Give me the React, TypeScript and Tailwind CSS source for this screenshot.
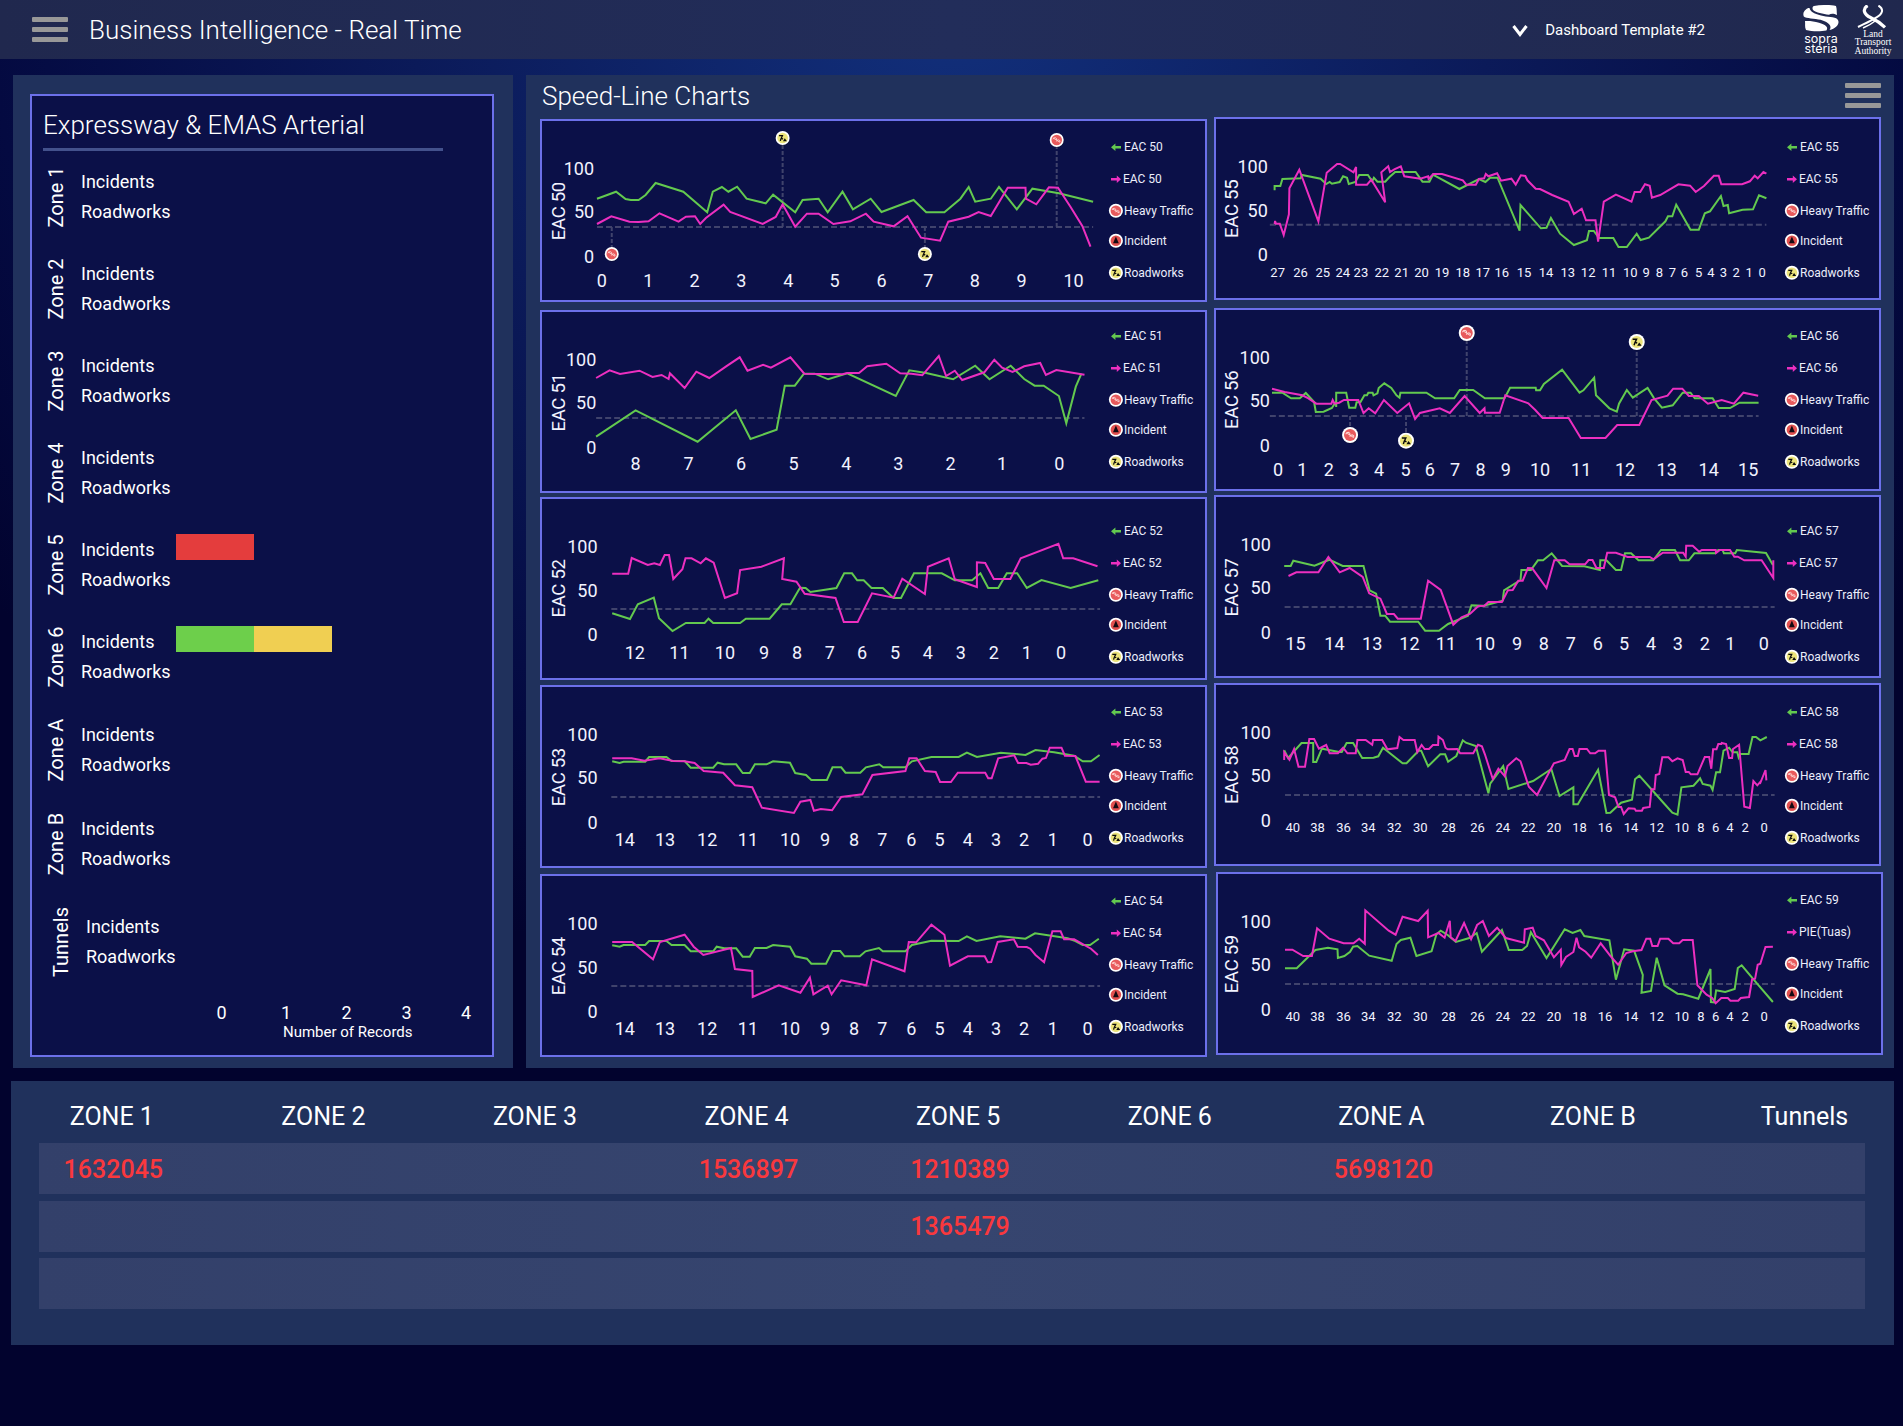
import React from "react";

type Kind = "heavy" | "incident" | "road";
type Marker = { kind: Kind; x: number; y: number };
type Chart = {
  name: string;
  inbound?: string;
  panel: string;
  legend: string;
  dx: number;
  dy: number;
  plotWidth: number;
  labelX: number;
  labelY: number;
  yRight: number;
  yTicks: [number, number, number];
  base: [number, number, number];
  tickY: number;
  tickSize: number;
  ticks: [string, number][];
  green: string;
  pink: string;
  markers?: Marker[];
  markerSize?: number;
};

/* Plot units: 1568 units span 680px horizontally, 3 units per pixel vertically. */
const UX = 680 / 1568;
const UY = 1 / 3;

const toPoints = (s: string) =>
  s
    .split(" ")
    .map((p) => {
      const [x, y] = p.split(",").map(Number);
      return `${(x * UX).toFixed(1)},${(y * UY).toFixed(1)}`;
    })
    .join(" ");

const down = (from: number, xs: number[], step = 1): [string, number][] =>
  xs.map((x, i) => [String(from - i * step), x]);
const up = (xs: number[]): [string, number][] => xs.map((x, i) => [String(i), x]);

const ticks14 = down(14, [207, 300, 397, 491, 588, 669, 736, 801, 868, 933, 998, 1063, 1128, 1194, 1274]);
const ticks40 = down(40, [191, 248, 308, 365, 425, 485, 550, 617, 675, 734, 793, 852, 911, 971, 1030, 1088, 1132, 1166, 1199, 1234, 1278], 2);

const leftCharts: Chart[] = [
  {
    name: "EAC 50", panel: "", legend: "pt-[10px]", dx: 5, dy: 4, plotWidth: 567,
    labelX: 55, labelY: 288, yRight: 134, yTicks: [161, 291, 425], base: [143, 1287, 336],
    tickY: 497, tickSize: 18, ticks: up([154, 261, 368, 476, 584, 691, 799, 907, 1014, 1122, 1242]),
    green: "143,251 187,230 209,252 221,255 239,255 255,240 278,204 342,230 397,292 410,230 431,216 446,230 466,215 488,251 532,265 549,239 600,292 617,255 654,251 675,292 709,230 733,283 774,251 799,291 873,255 902,292 944,292 981,251 1000,216 1015,260 1051,251 1070,216 1111,283 1147,221 1208,235 1287,260",
    pink: "143,327 176,304 218,320 239,321 262,319 287,295 331,320 348,305 369,304 381,327 394,309 435,269 450,291 525,327 555,306 571,268 600,335 627,296 654,296 688,327 727,319 763,296 781,320 827,334 859,304 890,368 934,377 953,320 1000,305 1023,291 1051,303 1090,218 1131,218 1132,251 1156,268 1185,217 1206,218 1235,276 1262,333 1281,395",
    markers: [
      { kind: "road", x: 571, y: 69 },
      { kind: "heavy", x: 1203, y: 75 },
      { kind: "heavy", x: 177, y: 417 },
      { kind: "road", x: 899, y: 417 },
    ],
    markerSize: 14,
  },
  {
    name: "EAC 51", panel: "mt-2", legend: "pt-2", dx: 5, dy: 5, plotWidth: 567,
    labelX: 55, labelY: 292, yRight: 139, yTicks: [164, 294, 428], base: [141, 1267, 339],
    tickY: 477, tickSize: 18, ticks: down(8, [232, 354, 475, 596, 718, 838, 958, 1077, 1209]),
    green: "141,395 232,316 375,410 463,316 497,402 557,374 576,242 599,242 620,206 645,206 676,223 720,205 832,273 863,196 902,204 964,223 1015,182 1048,223 1097,182 1128,222 1152,242 1173,242 1208,273 1225,355 1247,245 1260,206",
    pink: "141,219 172,196 196,207 241,197 271,216 292,210 308,222 311,205 345,249 372,200 402,219 440,185 472,157 490,197 526,179 544,188 589,157 621,206 709,208 720,204 747,204 766,184 810,176 842,205 868,206 893,211 931,153 948,213 968,197 985,225 1036,202 1059,164 1077,188 1101,201 1128,184 1165,174 1178,210 1202,195 1267,209",
  },
  {
    name: "EAC 52", panel: "mt-1", legend: "pt-4", dx: 5, dy: 2, plotWidth: 567,
    labelX: 55, labelY: 280, yRight: 142, yTicks: [155, 286, 419], base: [176, 1303, 342],
    tickY: 474, tickSize: 18, ticks: down(12, [230, 333, 438, 528, 604, 680, 754, 830, 906, 982, 1058, 1134, 1213]),
    green: "178,355 219,372 237,328 274,308 286,370 317,408 348,384 391,384 400,371 411,384 473,384 486,371 541,371 569,328 589,328 611,278 624,279 635,291 695,279 713,235 731,235 743,256 758,256 776,279 802,279 827,309 844,309 874,235 938,235 968,256 1008,256 1027,235 1045,279 1068,279 1088,235 1112,235 1134,279 1168,255 1235,279 1299,256",
    pink: "178,236 215,236 223,189 260,210 275,205 288,210 299,180 309,180 319,252 340,223 347,190 361,190 382,205 394,190 412,203 438,309 466,295 473,225 522,215 574,190 570,252 603,260 622,296 693,309 712,381 744,381 777,295 827,308 847,251 899,297 906,215 954,190 968,253 1019,276 1019,202 1038,204 1058,252 1096,252 1120,190 1207,146 1218,190 1241,190 1297,214",
  },
  {
    name: "EAC 53", panel: "mt-[5px]", legend: "pt-[9px]", dx: 5, dy: 0, plotWidth: 567,
    labelX: 55, labelY: 276, yRight: 142, yTicks: [149, 279, 413], base: [176, 1303, 336],
    tickY: 465, tickSize: 18, ticks: ticks14,
    green: "178,229 195,234 204,230 254,230 263,216 303,216 315,228 345,228 359,248 411,248 421,233 436,238 464,238 479,264 495,264 507,238 534,238 549,229 588,233 600,264 625,270 637,285 673,285 686,247 706,247 716,263 750,263 763,247 794,238 803,247 854,247 869,229 914,216 977,216 996,203 1019,216 1074,203 1131,210 1154,195 1197,202 1243,212 1263,229 1282,229 1302,210",
    pink: "178,220 223,220 252,227 287,220 319,228 345,229 368,234 389,258 434,263 461,301 501,307 523,368 597,384 612,350 635,345 643,377 659,372 685,376 706,336 755,328 778,270 854,258 863,220 880,220 899,258 924,261 934,291 959,291 975,263 1038,263 1045,280 1053,280 1068,220 1105,211 1114,234 1133,234 1143,239 1160,236 1170,221 1178,219 1187,188 1214,188 1222,212 1246,213 1270,290 1302,290",
  },
  {
    name: "EAC 54", panel: "mt-1.5", legend: "pt-[9px]", dx: 5, dy: 4, plotWidth: 567,
    labelX: 55, labelY: 288, yRight: 142, yTicks: [161, 292, 425], base: [176, 1303, 348],
    tickY: 477, tickSize: 18, ticks: ticks14,
    green: "178,226 195,230 204,225 254,225 263,213 303,213 315,225 345,225 359,244 411,244 419,230 436,235 464,235 479,260 495,260 507,234 534,234 549,225 588,230 600,259 627,266 637,281 671,281 686,243 704,243 714,259 749,259 762,244 793,234 802,244 854,244 869,225 914,212 977,213 996,199 1018,213 1073,199 1131,206 1153,190 1228,205 1246,213 1263,225 1280,225 1300,206",
    pink: "178,216 224,216 272,268 288,216 345,194 366,230 388,255 452,234 461,297 501,303 502,381 562,346 612,368 634,323 642,373 675,347 684,373 706,331 764,346 777,268 852,304 862,216 879,217 914,164 944,194 957,287 998,259 1037,259 1044,277 1052,276 1067,216 1104,208 1113,230 1134,231 1142,236 1154,255 1174,277 1193,184 1212,184 1220,208 1243,208 1282,236 1298,255",
  },
];

const rightCharts: Chart[] = [
  {
    name: "EAC 55", panel: "", legend: "pt-3", dx: 4, dy: 2, plotWidth: 569,
    labelX: 50, labelY: 281, yRight: 131, yTicks: [155, 286, 419], base: [138, 1283, 329],
    tickY: 471, tickSize: 13,
    ticks: down(27, [156, 209, 260, 306, 348, 396, 442, 488, 535, 583, 629, 673, 724, 775, 825, 872, 920, 969, 1006, 1036, 1066, 1094, 1127, 1155, 1184, 1213, 1243, 1273]),
    green: "149,226 149,213 162,213 167,192 209,190 212,180 255,191 268,207 276,201 281,206 299,201 307,184 316,188 320,207 335,201 344,180 364,180 374,199 378,188 386,200 404,200 414,186 427,171 474,171 490,200 506,200 514,179 575,222 620,192 635,201 646,188 663,188 714,347 716,270 763,340 776,338 786,309 807,356 839,390 869,376 874,348 885,348 897,369 930,369 942,396 961,396 984,356 993,375 1012,368 1050,319 1056,304 1066,304 1075,269 1108,344 1127,344 1141,295 1153,289 1178,243 1184,273 1194,270 1197,295 1228,284 1252,283 1266,241 1283,250",
    pink: "149,327 150,318 152,326 161,326 170,360 182,298 183,220 206,164 250,319 269,173 293,147 300,147 331,172 337,156 337,209 362,209 372,194 404,262 395,172 411,154 415,171 425,163 440,154 448,184 485,191 503,184 504,192 515,177 535,177 583,196 591,209 613,209 620,192 632,190 636,177 642,184 662,175 671,197 695,191 705,209 717,181 727,183 732,196 751,221 761,222 789,240 827,260 839,297 857,281 867,316 889,316 895,380 908,260 936,239 972,260 979,231 992,231 1003,208 1014,212 1019,248 1038,240 1080,208 1107,212 1120,231 1139,213 1162,182 1173,182 1179,208 1227,208 1245,199 1256,182 1263,190 1276,171 1283,176",
  },
  {
    name: "EAC 56", panel: "mt-2", legend: "pt-2.5", dx: 4, dy: 3, plotWidth: 569,
    labelX: 50, labelY: 284, yRight: 136, yTicks: [158, 288, 422], base: [138, 1265, 333],
    tickY: 493, tickSize: 18, ticks: up([157, 213, 274, 332, 390, 451, 507, 565, 624, 682, 761, 856, 957, 1053, 1150, 1241]),
    green: "143,263 167,263 187,280 207,280 221,264 240,291 244,321 262,320 281,309 290,291 291,306 291,263 314,263 321,308 335,308 338,292 347,291 356,271 362,271 365,263 375,263 377,271 386,265 389,249 402,235 418,249 430,271 437,278 439,263 499,263 519,280 563,280 576,255 607,255 634,280 679,280 692,248 751,248 752,256 761,256 770,237 812,194 852,263 861,256 886,218 890,271 921,310 938,320 943,296 961,255 975,278 1009,249 1024,280 1042,308 1067,301 1090,263 1108,263 1118,280 1159,280 1173,309 1199,309 1221,293 1265,293",
    pink: "143,251 172,261 213,271 227,280 245,296 280,296 283,285 287,296 298,293 309,285 342,285 354,324 366,310 381,325 401,285 432,324 459,295 473,342 484,324 530,310 553,324 587,273 622,324 633,310 634,323 668,323 681,271 734,295 750,315 767,339 827,339 855,399 912,399 939,360 990,360 1018,285 1055,272 1068,251 1089,251 1104,273 1127,273 1148,296 1180,285 1208,296 1230,263 1264,272",
    markers: [
      { kind: "heavy", x: 592, y: 84 },
      { kind: "road", x: 984, y: 111 },
      { kind: "heavy", x: 323, y: 390 },
      { kind: "road", x: 452, y: 407 },
    ],
    markerSize: 16,
  },
  {
    name: "EAC 57", panel: "mt-1", legend: "pt-[18px]", dx: 4, dy: 5, plotWidth: 569,
    labelX: 50, labelY: 292, yRight: 138, yTicks: [164, 294, 428], base: [172, 1302, 351],
    tickY: 461, tickSize: 18, ticks: down(15, [197, 287, 374, 460, 544, 634, 708, 770, 832, 894, 955, 1017, 1079, 1141, 1200, 1277]),
    green: "171,228 186,228 192,212 241,227 275,209 306,228 354,228 368,301 383,311 393,377 404,377 415,395 480,395 496,422 528,422 549,402 595,377 603,346 631,347 675,332 678,301 716,270 718,240 740,240 756,211 768,211 788,190 812,228 863,229 899,240 900,211 914,211 936,240 948,240 957,190 971,190 988,211 1022,211 1040,180 1072,180 1084,211 1104,211 1117,190 1165,190 1172,180 1182,180 1185,190 1211,190 1215,180 1282,189 1298,225",
    pink: "181,258 199,247 250,247 273,201 299,247 322,234 352,261 367,310 393,326 408,372 424,372 433,386 486,386 503,272 532,300 561,404 580,382 600,371 619,348 633,347 642,336 673,336 687,301 698,300 711,272 721,272 733,234 743,235 776,294 794,211 818,211 829,223 865,223 873,210 882,210 891,234 908,234 916,188 936,188 963,201 1014,201 1023,208 1044,188 1091,188 1097,200 1098,167 1113,167 1128,185 1134,180 1166,180 1167,189 1176,180 1199,180 1209,200 1217,200 1232,211 1272,211 1299,264 1299,211",
  },
  {
    name: "EAC 58", panel: "mt-[5px]", legend: "pt-[11px]", dx: 4, dy: 3, plotWidth: 569,
    labelX: 50, labelY: 284, yRight: 138, yTicks: [158, 288, 422], base: [173, 1302, 345],
    tickY: 443, tickSize: 13, ticks: ticks40,
    green: "171,211 180,234 211,189 238,189 238,246 245,246 258,206 298,216 304,216 315,189 330,189 351,234 377,233 388,229 399,203 444,250 453,250 481,212 487,212 503,259 531,223 542,223 549,245 568,228 583,181 590,188 613,198 642,340 646,311 676,258 688,327 745,303 787,267 806,348 838,322 838,373 848,373 895,269 914,399 923,398 948,368 973,359 980,298 990,287 1048,372 1066,398 1078,404 1087,322 1115,317 1130,295 1136,312 1154,317 1159,330 1167,277 1176,277 1184,212 1197,203 1205,217 1216,217 1219,232 1222,222 1242,222 1251,171 1259,171 1269,181 1284,171",
    pink: "171,240 171,217 183,239 194,207 204,260 219,260 229,177 240,177 251,206 268,195 276,220 295,220 307,203 317,220 336,220 340,180 359,180 374,194 376,180 397,180 409,208 432,204 437,171 446,180 472,180 478,216 488,195 495,207 505,207 514,195 526,195 527,170 537,180 543,203 548,208 570,207 577,220 607,220 618,194 627,199 634,223 652,297 665,266 680,289 686,258 706,235 716,244 735,320 754,345 793,250 818,240 829,207 836,207 841,228 848,228 852,207 869,207 877,220 888,220 896,212 911,212 920,345 934,352 942,381 948,381 954,402 965,385 979,386 982,392 996,392 999,384 1014,381 1018,328 1025,328 1028,285 1036,282 1043,232 1057,232 1066,244 1078,235 1090,240 1097,276 1104,276 1109,283 1124,283 1141,231 1151,231 1156,266 1160,208 1168,208 1172,192 1179,192 1180,189 1190,192 1197,234 1204,234 1206,207 1220,194 1232,380 1245,384 1253,303 1262,316 1270,304 1268,312 1281,270 1283,301",
  },
  {
    name: "EAC 59", inbound: "PIE(Tuas)", panel: "mt-1.5 ml-0.5", legend: "pt-2.5", dx: 6, dy: 4, plotWidth: 567,
    labelX: 50, labelY: 288, yRight: 138, yTicks: [162, 291, 425], base: [173, 1302, 348],
    tickY: 446, tickSize: 13, ticks: ticks40,
    green: "173,301 200,301 243,246 272,239 294,244 295,270 310,264 323,251 330,236 340,234 367,263 419,278 430,228 440,216 462,209 476,264 511,250 522,199 532,188 548,201 567,222 598,210 615,195 627,251 673,186 689,246 720,246 731,234 740,193 776,270 818,184 836,195 854,186 863,204 921,217 936,335 955,244 978,248 998,321 995,374 1017,369 1030,269 1048,352 1078,377 1091,379 1126,392 1154,303 1155,402 1163,403 1167,367 1176,369 1188,372 1210,363 1217,300 1226,292 1261,346 1298,402",
    pink: "173,245 190,245 215,264 235,264 247,181 275,212 308,226 331,226 344,212 357,227 358,127 412,188 428,200 444,146 480,159 502,128 503,208 527,195 541,209 553,158 555,208 566,219 586,165 602,214 616,171 629,159 643,204 662,179 682,210 724,224 726,184 744,179 751,204 770,217 793,268 809,245 810,291 821,267 838,252 845,209 851,238 866,251 879,269 901,226 924,265 941,290 960,255 975,250 995,246 1006,212 1015,212 1020,234 1032,234 1038,212 1057,212 1068,226 1082,226 1090,216 1113,216 1124,352 1145,380 1158,390 1166,406 1179,390 1194,390 1200,398 1218,398 1224,390 1243,387 1250,334 1257,332 1263,290 1269,287 1281,237 1298,236",
  },
];

/* Round status badge, drawn in a 16x16 box centred on the origin. */
function Badge({ kind }: { kind: Kind }) {
  return (
    <g>
      <circle r="7.6" cx="0.5" cy="1" fill="#000" opacity="0.25" />
      <circle r="7.8" fill="#fff" />
      <circle r="5.9" fill={kind === "road" ? "#ebe37a" : kind === "heavy" ? "#e85a5c" : "#e2504f"} />
      {kind === "heavy" && (
        <g transform="rotate(33)" fill="none" stroke="#ffd9d6" strokeWidth="0.9">
          <path d="M-4.4 0.2h8.8M-4 1.6v-1.6l1.2-1.3h1.7l1 1.3M0.6 1.6v-1.6l1.1-1.3h1.7l0.8 1.3" />
        </g>
      )}
      {kind === "incident" && <path d="M0 -4.6L3.2 2.8H-3.2Z" fill="#150a12" />}
      {kind === "road" && (
        <g>
          <path d="M-4 -2.6H-0.2L-1.8 0.8L-2.6 3.2M-1.8 0L0.4 1.2" fill="none" stroke="#0b0b0b" strokeWidth="1.4" />
          <path d="M0.4 3.6L2.4 0.4L4.8 3.6Z" fill="#0b0b0b" />
        </g>
      )}
    </g>
  );
}

function Plot({ c }: { c: Chart }) {
  const [x0, x1, by] = c.base;
  return (
    <svg width={c.plotWidth} height="179" className="shrink-0 overflow-visible" style={{ fontFamily: "Roboto, sans-serif" }}>
      <g transform={`translate(${-c.dx - 2} ${-c.dy - 2})`}>
        <text
          transform={`translate(${c.labelX * UX + 6.3} ${c.labelY * UY}) rotate(-90)`}
          textAnchor="middle"
          fontSize="18.5"
          textLength="58.5"
          fill="#f2f3ff"
        >
          {c.name}
        </text>
        {["100", "50", "0"].map((t, i) => (
          <text key={t} x={c.yRight * UX + 1} y={c.yTicks[i] * UY + 6.4} textAnchor="end" fontSize="18" fill="#f2f3ff">
            {t}
          </text>
        ))}
        {c.ticks.map(([t, x]) => (
          <text key={t} x={x * UX} y={c.tickY * UY + (c.tickSize === 18 ? 6.4 : 4.7)} textAnchor="middle" fontSize={c.tickSize} fill="#f2f3ff">
            {t}
          </text>
        ))}
        <g stroke="#40436c" strokeWidth="2" strokeDasharray="6 3" fill="none">
          <path d={`M${x0 * UX} ${by * UY}H${x1 * UX}`} />
          {c.markers?.map((m, i) => (
            <path key={i} d={`M${m.x * UX} ${by * UY}V${m.y * UY}`} strokeDasharray="4 2" strokeWidth="2" />
          ))}
        </g>
        <polyline points={toPoints(c.green)} fill="none" stroke="#63c94f" strokeWidth="2" />
        <polyline points={toPoints(c.pink)} fill="none" stroke="#ec2fc0" strokeWidth="2" />
        {c.markers?.map((m, i) => (
          <g key={i} transform={`translate(${m.x * UX} ${m.y * UY}) scale(${(c.markerSize ?? 16) / 15.6})`}>
            <Badge kind={m.kind} />
          </g>
        ))}
      </g>
    </svg>
  );
}

function Arrow({ left }: { left?: boolean }) {
  return (
    <svg width="15" height="14" viewBox="0 0 15 14" className="shrink-0">
      {left ? (
        <path d="M2 7.2L6.4 3.4V5.9H12V8.5H6.4V11Z" fill="#63c94f" />
      ) : (
        <path d="M12 7.2L7.8 3.4V5.9H2V8.5H7.8V11Z" fill="#ec2fc0" />
      )}
    </svg>
  );
}

function LegendIcon({ kind }: { kind: Kind }) {
  return (
    <svg width="15" height="18" viewBox="-7.5 -9 15 18" className="shrink-0 overflow-visible">
      <g transform="translate(-0.6 -0.3) scale(0.9)">
        <Badge kind={kind} />
      </g>
    </svg>
  );
}

function ChartPanel({ c }: { c: Chart }) {
  return (
    <div className={`flex h-[183px] w-[667px] border-2 border-[#6c70ea] bg-[#0b1048] ${c.panel}`}>
      <Plot c={c} />
      <div className={`flex flex-col text-xs whitespace-nowrap text-[#eceefb] ${c.legend}`}>
        <div className="flex h-8 items-center"><Arrow left />{c.name}</div>
        <div className="flex h-8 items-center"><Arrow /><span className="-ml-px">{c.inbound ?? c.name}</span></div>
        <div className="flex h-8 items-center"><LegendIcon kind="heavy" />Heavy Traffic</div>
        <div className="flex h-7 items-center"><LegendIcon kind="incident" />Incident</div>
        <div className="flex h-9 items-center"><LegendIcon kind="road" />Roadworks</div>
      </div>
    </div>
  );
}

function Burger() {
  return (
    <div className="flex w-9 flex-col gap-[5px]">
      <div className="h-[5px] rounded-[1px] bg-[#989898]" />
      <div className="h-[5px] rounded-[1px] bg-[#989898]" />
      <div className="h-[5px] rounded-[1px] bg-[#989898]" />
    </div>
  );
}

const zones = [
  { name: "Zone 1", row: "h-[92px]" },
  { name: "Zone 2", row: "h-[92px]" },
  { name: "Zone 3", row: "h-[92px]" },
  { name: "Zone 4", row: "h-[92px]" },
  { name: "Zone 5", row: "h-[92px]", bars: ["bg-[#e43d3d]"] },
  { name: "Zone 6", row: "h-[93px]", bars: ["bg-[#6dcf4b]", "bg-[#f0cf52]"] },
  { name: "Zone A", row: "h-[94px]" },
  { name: "Zone B", row: "h-[98px]" },
  { name: "Tunnels", row: "h-[86px] pl-[5px]" },
];

const headers = ["ZONE 1", "ZONE 2", "ZONE 3", "ZONE 4", "ZONE 5", "ZONE 6", "ZONE A", "ZONE B", "Tunnels"];
const rows: Record<number, string>[] = [
  { 0: "1632045", 3: "1536897", 4: "1210389", 6: "5698120" },
  { 4: "1365479" },
  {},
];

function SopraLogo() {
  return (
    <div className="flex w-[36px] flex-col items-center text-white">
      <svg width="36" height="27" viewBox="0 0 36 27" fill="#fff">
        <path d="M11 1C18 -0.4 27 -0.3 33 1C34 4 33.6 7 34 10C30.5 8.2 27.6 8.6 26 9.8C20 9 13 7.6 10 5C9 3 9.6 1.6 11 1Z" />
        <path d="M6.5 2.5C1 4.5 -0.6 8 0.8 11.4C3 13.4 12 13.4 17.5 14.8C25 17 29.5 20.4 26.6 25C33.6 23.6 37.4 18 34.6 14.4C31.5 11.4 24 12.4 18 10.6C11 8.8 6.4 6.4 6.5 2.5Z" />
        <path d="M2 16C2.4 19 1.5 22 3 25C9 26.8 18 26.6 23.4 25.6C26 22 22 19.6 16 17.8C11 16.2 6 15.6 2 16Z" />
      </svg>
      <div className="mt-[2px] font-[Inter] text-[12.5px] leading-[10px]">sopra</div>
      <div className="font-[Inter] text-[12.5px] leading-[10px]">steria</div>
    </div>
  );
}

function LtaLogo() {
  return (
    <div className="flex w-[40px] flex-col items-center text-white">
      <svg width="32" height="24" viewBox="0 0 32 24" fill="none" stroke="#fff">
        <path d="M10.6 0.6C5 4 7 9.6 13.5 12.5C20 15.5 24 18.5 28 22.4" strokeWidth="3.2" />
        <path d="M21.4 0.6C27.4 4 25.5 9 19.5 12.3C13 16.5 8 18.5 1 22" strokeWidth="2" />
        <path d="M6 23C12 20.6 16 17.8 19.5 15" strokeWidth="1.6" />
      </svg>
      <div className="mt-px text-center font-['Liberation_Serif',serif] text-[9.5px] leading-[8.5px]">
        Land
        <br />
        Transport
        <br />
        Authority
      </div>
    </div>
  );
}

export default function App() {
  return (
    <div className="h-[1426px] w-[1903px] overflow-hidden bg-[#02032e] bg-[radial-gradient(ellipse_1200px_1000px_at_50%_0%,#12307c_0%,#0b1a59_45%,#040a41_80%,#02032e_100%)] font-[Roboto,sans-serif] text-white">
      <header className="flex h-[59px] items-center bg-[linear-gradient(90deg,#20284e,#222d5a_50%,#20284e)] pl-8">
        <Burger />
        <h1 className="ml-[21px] pt-px text-[26px] font-light">Business Intelligence - Real Time</h1>
        <div className="ml-auto flex items-center">
          <svg width="16" height="16" viewBox="0 0 16 16" className="mt-0.5 mr-[17px]" fill="none" stroke="#fff" strokeWidth="3">
            <path d="M1.5 3L8 11.5L14.5 3" />
          </svg>
          <span className="mr-[98px] pt-px text-[15px]">Dashboard Template #2</span>
          <SopraLogo />
          <div className="mr-[10px] ml-[14px] pt-px"><LtaLogo /></div>
        </div>
      </header>

      <main className="mt-4 flex gap-[13px] pl-[13px]">
        <section className="h-[993px] w-[500px] bg-[#20315c] px-[17px] pt-[19px]">
          <div className="h-[963px] w-[464px] border-2 border-[#6c70ea] bg-[#0b1048] pl-[11px]">
            <h2 className="pt-[11px] text-[26px] leading-[36px] font-light">Expressway &amp; EMAS Arterial</h2>
            <div className="mt-[5px] h-[3px] w-[400px] bg-[#43518c]" />
            <div className="pt-[16px]">
              {zones.map((z) => (
                <div key={z.name} className={`flex ${z.row}`}>
                  <div className="flex h-[59px] w-[26px] items-center justify-center">
                    <span className="-rotate-90 text-[20px] whitespace-nowrap">{z.name}</span>
                  </div>
                  <div className="ml-3 w-[95px] text-[18px] leading-[30px]">
                    <div>Incidents</div>
                    <div>Roadworks</div>
                  </div>
                  <div className="-mt-px flex">
                    {z.bars?.map((b) => <div key={b} className={`h-[26px] w-[78px] ${b}`} />)}
                  </div>
                </div>
              ))}
            </div>
            <div className="mt-1 ml-[147px] flex w-[310px] text-[18px] leading-[22px]">
              <span className="w-[63px] text-center">0</span>
              <span className="w-[66px] text-center">1</span>
              <span className="w-[55px] text-center">2</span>
              <span className="w-[65px] text-center">3</span>
              <span className="w-[54px] text-center">4</span>
            </div>
            <div className="-mt-px ml-[240px] text-[15px] leading-[18px]">Number of Records</div>
          </div>
        </section>

        <section className="h-[993px] w-[1368px] bg-[#20315c] pl-[14px]">
          <div className="flex h-[42px] items-start justify-between pr-[13px]">
            <h2 className="pt-[3px] pl-0.5 text-[26px] leading-[36px] font-light">Speed-Line Charts</h2>
            <div className="pt-2"><Burger /></div>
          </div>
          <div className="flex gap-[7px]">
            <div className="pt-0.5">{leftCharts.map((c) => <ChartPanel key={c.name} c={c} />)}</div>
            <div>{rightCharts.map((c) => <ChartPanel key={c.name} c={c} />)}</div>
          </div>
        </section>
      </main>

      <section className="mt-[13px] ml-[11px] h-[264px] w-[1883px] bg-[#20315c] pt-4">
        <div className="-ml-[5px] flex">
          {headers.map((h) => (
            <div key={h} className="w-[211.6px] shrink-0 text-center text-[25px] leading-[40px]">{h}</div>
          ))}
        </div>
        <div className="mt-1.5 ml-7 flex w-[1826px] flex-col gap-[6.5px]">
          {rows.map((r, i) => (
            <div key={i} className="flex h-[51px] items-center bg-[linear-gradient(90deg,#33406a,#36456f_50%,#33406a)] pt-0.5">
              {headers.map((h, j) => (
                <div key={h} className="relative -left-[31.5px] w-[211.7px] shrink-0 text-center text-[25px] font-medium text-[#f9383d]">
                  {r[j] ?? ""}
                </div>
              ))}
            </div>
          ))}
        </div>
      </section>
    </div>
  );
}
